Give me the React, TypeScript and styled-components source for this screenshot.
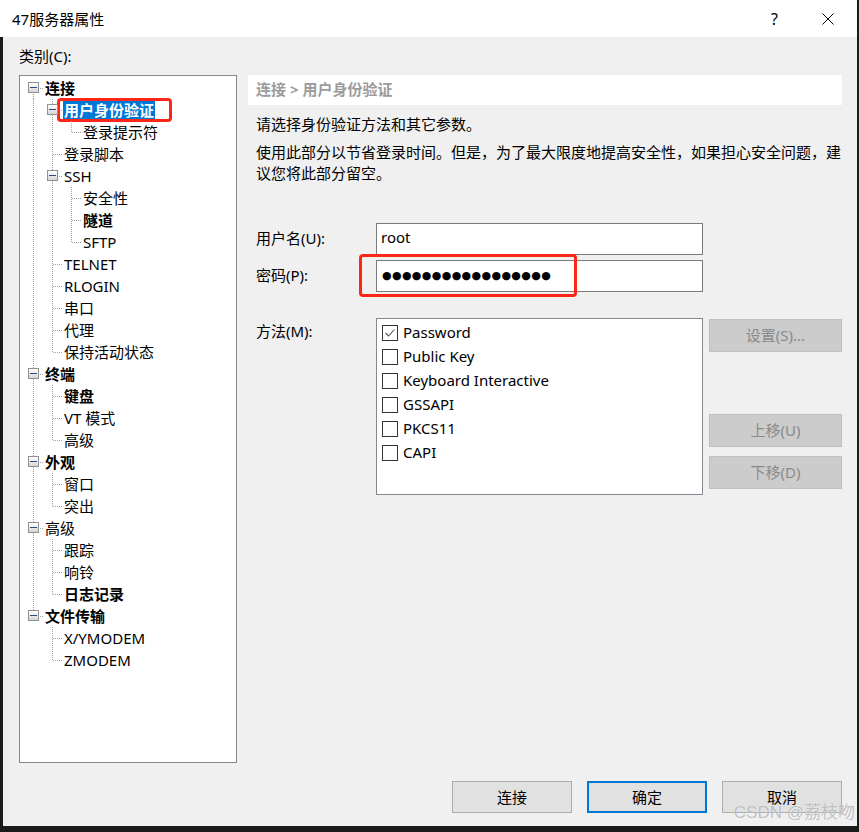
import React from "react";
import styled, { createGlobalStyle, css } from "styled-components";

const GlobalStyle = createGlobalStyle`
  html, body {
    margin: 0;
    padding: 0;
    background: #1b1b1b;
  }
  body {
    font-family: "Noto Sans", "Noto Sans CJK SC", sans-serif;
  }
`;

const Window = styled.div`
  position: relative;
  width: 857px;
  height: 826px;
  background: #f0f0f0;
  display: flex;
  flex-direction: column;
  font-size: 15px;
  color: #000;
  overflow: hidden;
`;

const TitleBar = styled.div`
  height: 37px;
  background: #fff;
  display: flex;
  align-items: center;
  padding-left: 12px;
  padding-right: 3px;
`;

const TitleText = styled.div`
  flex: 1;
  font-size: 15px;
  padding-bottom: 1px;
`;

const CaptionButton = styled.div`
  width: 53px;
  height: 37px;
  display: flex;
  align-items: center;
  justify-content: center;
  font-size: 16px;
`;

const Body = styled.div`
  flex: 1;
  border-left: 3px solid #1b1b1b;
  padding: 0 15px 0 16px;
  display: flex;
  flex-direction: column;
`;

const CategoryLabel = styled.div`
  height: 36px;
  padding-bottom: 2px;
  display: flex;
  align-items: center;
`;

const Main = styled.div`
  height: 688px;
  display: flex;
  gap: 11px;
`;

const TreePanel = styled.div`
  width: 218px;
  box-sizing: border-box;
  border: 1px solid #828790;
  background: #fff;
  padding: 1px 0 0 4px;
`;

const dotsV = css`
  background-image: repeating-linear-gradient(
    to bottom,
    #a0a0a0 0 1px,
    transparent 1px 2px
  );
`;

const dotsH = css`
  background-image: repeating-linear-gradient(
    to right,
    #a0a0a0 0 1px,
    transparent 1px 2px
  );
`;

const TreeRow = styled.div`
  height: 22px;
  display: flex;
  align-items: center;
`;

const Guide = styled.div<{ $line: boolean }>`
  position: relative;
  width: 19px;
  height: 22px;
  flex: none;
  ${(p) =>
    p.$line &&
    css`
      &::before {
        content: "";
        position: absolute;
        left: 9px;
        top: 0;
        bottom: 0;
        width: 1px;
        ${dotsV}
      }
    `}
`;

const Connector = styled.div<{ $top: boolean; $bottom: boolean }>`
  position: relative;
  width: 19px;
  height: 22px;
  flex: none;
  &::before {
    content: "";
    position: absolute;
    left: 9px;
    top: ${(p) => (p.$top ? "0" : "11px")};
    bottom: ${(p) => (p.$bottom ? "0" : "11px")};
    width: 1px;
    ${dotsV}
  }
  &::after {
    content: "";
    position: absolute;
    left: 10px;
    top: 11px;
    width: 9px;
    height: 1px;
    ${dotsH}
  }
`;

const ExpandBox = styled.div`
  position: absolute;
  z-index: 1;
  left: 4px;
  top: 5px;
  width: 11px;
  height: 11px;
  box-sizing: border-box;
  border: 1px solid #919191;
  background: linear-gradient(#ffffff, #d6d6d6);
  &::after {
    content: "";
    position: absolute;
    left: 1px;
    top: 4px;
    width: 7px;
    height: 1px;
    background: #2c4a86;
  }
`;

const NodeLabel = styled.span<{ $bold?: boolean; $selected?: boolean }>`
  position: relative;
  margin-left: 1px;
  padding: 0 1px;
  line-height: 19px;
  white-space: nowrap;
  font-weight: ${(p) => (p.$bold ? 700 : 400)};
  ${(p) =>
    p.$selected &&
    css`
      background: #0078d7;
      color: #fff;
    `}
`;

const Annotation = styled.div`
  position: absolute;
  box-sizing: border-box;
  border: 3px solid #fe2618;
  border-radius: 4px;
  pointer-events: none;
`;

const RightPanel = styled.div`
  width: 594px;
  display: flex;
  flex-direction: column;
`;

const Header = styled.div`
  height: 30px;
  box-sizing: border-box;
  background: #fff;
  padding: 0 0 3px 8px;
  display: flex;
  align-items: center;
  color: #9b9b9b;
  font-weight: 700;
`;

const Content = styled.div`
  padding-left: 8px;
`;

const Intro = styled.div`
  margin-top: 9px;
  line-height: 21px;
`;

const Para = styled.div`
  margin-top: 7px;
  line-height: 21px;
  width: 586px;
`;

const Form = styled.div`
  margin-top: 39px;
  display: flex;
  flex-direction: column;
  gap: 5px;
`;

const FieldRow = styled.div`
  display: flex;
  align-items: center;
  height: 32px;
`;

const FieldLabel = styled.div`
  width: 120px;
  flex: none;
  padding-bottom: 3px;
`;

const FieldWrap = styled.div`
  position: relative;
`;

const Input = styled.div`
  width: 327px;
  height: 32px;
  box-sizing: border-box;
  border: 1px solid #7a7a7a;
  background: #fff;
  padding: 0 0 4px 4px;
  display: flex;
  align-items: center;
`;

const Dots = styled.span`
  font-family: "DejaVu Sans", sans-serif;
  font-size: 11px;
  letter-spacing: 0.35px;
  padding: 3px 0 0 1px;
`;

const MethodRow = styled.div`
  margin-top: 26px;
  display: flex;
  align-items: flex-start;
`;

const MethodLabel = styled.div`
  width: 120px;
  flex: none;
  padding-top: 1px;
  line-height: 24px;
`;

const MethodList = styled.div`
  width: 327px;
  height: 177px;
  box-sizing: border-box;
  border: 1px solid #828790;
  background: #fff;
  padding: 2px 0 0 5px;
`;

const MethodItem = styled.div`
  height: 24px;
  display: flex;
  align-items: center;
  gap: 5px;
`;

const MethodText = styled.span`
  padding-bottom: 2px;
`;

const CheckBox = styled.div`
  width: 16px;
  height: 16px;
  box-sizing: border-box;
  border: 1px solid #333;
  background: #fff;
  display: flex;
  align-items: center;
  justify-content: center;
`;

const SideButtons = styled.div`
  margin-left: 6px;
  padding-top: 1px;
  display: flex;
  flex-direction: column;
`;

const DisabledButton = styled.div<{ $gap?: number }>`
  width: 133px;
  height: 33px;
  box-sizing: border-box;
  margin-top: ${(p) => p.$gap ?? 0}px;
  padding-bottom: 2px;
  border: 1px solid #bfbfbf;
  background: #cccccc;
  color: #8a8a8a;
  display: flex;
  align-items: center;
  justify-content: center;
`;

const Footer = styled.div`
  margin-top: 18px;
  display: flex;
  justify-content: flex-end;
  gap: 15px;
`;

const DialogButton = styled.div<{ $default?: boolean }>`
  width: 120px;
  height: 32px;
  box-sizing: border-box;
  padding-bottom: 2px;
  border: ${(p) => (p.$default ? "2px solid #0078d7" : "1px solid #adadad")};
  background: #e1e1e1;
  display: flex;
  align-items: center;
  justify-content: center;
`;

const Watermark = styled.div`
  position: absolute;
  right: 2px;
  bottom: 3px;
  font-family: "Liberation Sans", "Noto Sans CJK SC", sans-serif;
  font-size: 17px;
  line-height: 20px;
  color: rgba(140, 140, 140, 0.55);
  text-shadow: 0 0 1px rgba(255, 255, 255, 0.9);
  pointer-events: none;
`;

type TreeNode = {
  label: string;
  bold?: boolean;
  selected?: boolean;
  children?: TreeNode[];
};

type FlatRow = {
  node: TreeNode;
  guides: boolean[];
  first: boolean;
  last: boolean;
};

const tree: TreeNode[] = [
  {
    label: "连接",
    bold: true,
    children: [
      {
        label: "用户身份验证",
        bold: true,
        selected: true,
        children: [{ label: "登录提示符" }],
      },
      { label: "登录脚本" },
      {
        label: "SSH",
        children: [
          { label: "安全性" },
          { label: "隧道", bold: true },
          { label: "SFTP" },
        ],
      },
      { label: "TELNET" },
      { label: "RLOGIN" },
      { label: "串口" },
      { label: "代理" },
      { label: "保持活动状态" },
    ],
  },
  {
    label: "终端",
    bold: true,
    children: [{ label: "键盘", bold: true }, { label: "VT 模式" }, { label: "高级" }],
  },
  {
    label: "外观",
    bold: true,
    children: [{ label: "窗口" }, { label: "突出" }],
  },
  {
    label: "高级",
    children: [{ label: "跟踪" }, { label: "响铃" }, { label: "日志记录", bold: true }],
  },
  {
    label: "文件传输",
    bold: true,
    children: [{ label: "X/YMODEM" }, { label: "ZMODEM" }],
  },
];

function flatten(nodes: TreeNode[], level: number, guides: boolean[], out: FlatRow[]) {
  nodes.forEach((node, i) => {
    const last = i === nodes.length - 1;
    out.push({ node, guides, first: level === 0 && i === 0, last });
    if (node.children) flatten(node.children, level + 1, [...guides, !last], out);
  });
  return out;
}

const rows = flatten(tree, 0, [], []);

const methods = [
  { name: "Password", checked: true },
  { name: "Public Key" },
  { name: "Keyboard Interactive" },
  { name: "GSSAPI" },
  { name: "PKCS11" },
  { name: "CAPI" },
];

const CheckMark = () => (
  <svg width="12" height="12" viewBox="0 0 12 12">
    <polyline points="1.5,6 4.5,9 10.5,2.5" fill="none" stroke="#555" strokeWidth="1.1" />
  </svg>
);

const CloseIcon = () => (
  <svg width="12" height="12" viewBox="0 0 12 12">
    <path d="M0.5 0.5 L11.5 11.5 M11.5 0.5 L0.5 11.5" stroke="#000" strokeWidth="1" />
  </svg>
);

const App: React.FC = () => (
  <>
    <GlobalStyle />
    <Window>
      <TitleBar>
        <TitleText>47服务器属性</TitleText>
        <CaptionButton>?</CaptionButton>
        <CaptionButton>
          <CloseIcon />
        </CaptionButton>
      </TitleBar>
      <Body>
        <CategoryLabel>类别(C):</CategoryLabel>
        <Main>
          <TreePanel>
            {rows.map(({ node, guides, first, last }, i) => (
              <TreeRow key={i}>
                {guides.map((g, j) => (
                  <Guide key={j} $line={g} />
                ))}
                <Connector $top={!first} $bottom={!last}>
                  {node.children && <ExpandBox />}
                </Connector>
                <NodeLabel $bold={node.bold} $selected={node.selected}>
                  {node.label}
                  {node.selected && (
                    <Annotation style={{ left: -6, top: -3, width: 115, height: 24 }} />
                  )}
                </NodeLabel>
              </TreeRow>
            ))}
          </TreePanel>
          <RightPanel>
            <Header>连接 &gt; 用户身份验证</Header>
            <Content>
              <Intro>请选择身份验证方法和其它参数。</Intro>
              <Para>
                使用此部分以节省登录时间。但是，为了最大限度地提高安全性，如果担心安全问题，建议您将此部分留空。
              </Para>
              <Form>
                <FieldRow>
                  <FieldLabel>用户名(U):</FieldLabel>
                  <Input>root</Input>
                </FieldRow>
                <FieldRow>
                  <FieldLabel>密码(P):</FieldLabel>
                  <FieldWrap>
                    <Input>
                      <Dots>{"●".repeat(17)}</Dots>
                    </Input>
                    <Annotation style={{ left: -17, top: -6, width: 218, height: 43 }} />
                  </FieldWrap>
                </FieldRow>
              </Form>
              <MethodRow>
                <MethodLabel>方法(M):</MethodLabel>
                <MethodList>
                  {methods.map((m) => (
                    <MethodItem key={m.name}>
                      <CheckBox>{m.checked && <CheckMark />}</CheckBox>
                      <MethodText>{m.name}</MethodText>
                    </MethodItem>
                  ))}
                </MethodList>
                <SideButtons>
                  <DisabledButton>设置(S)...</DisabledButton>
                  <DisabledButton $gap={62}>上移(U)</DisabledButton>
                  <DisabledButton $gap={9}>下移(D)</DisabledButton>
                </SideButtons>
              </MethodRow>
            </Content>
          </RightPanel>
        </Main>
        <Footer>
          <DialogButton>连接</DialogButton>
          <DialogButton $default>确定</DialogButton>
          <DialogButton>取消</DialogButton>
        </Footer>
      </Body>
      <Watermark>CSDN @荔枝吻</Watermark>
    </Window>
  </>
);

export default App;
